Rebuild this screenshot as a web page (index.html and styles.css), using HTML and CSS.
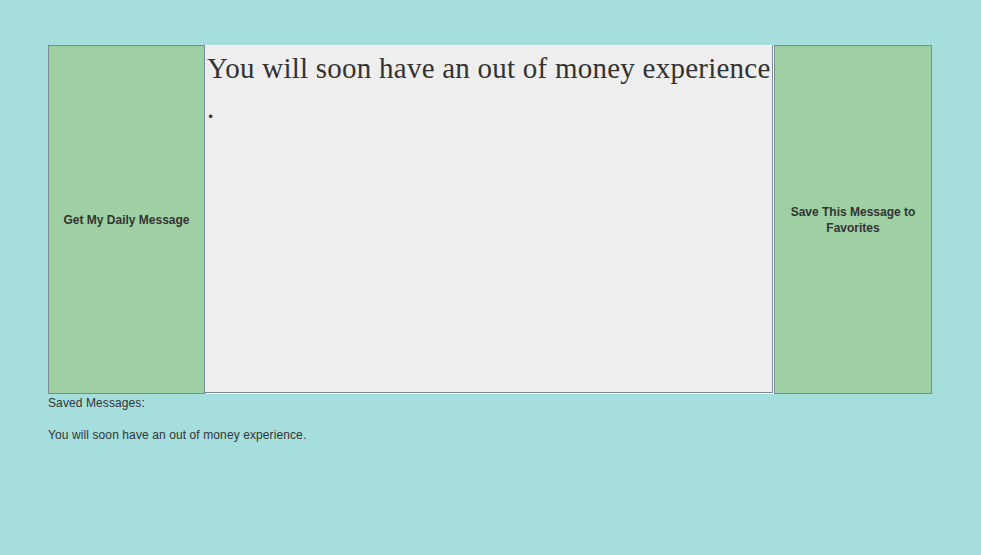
FILE: index.html
```html
<!DOCTYPE html>
<html>
<head>
<meta charset="utf-8">
<link rel="stylesheet" href="styles.css">
</head>
<body>
<div class="app">
  <div class="row">
    <div class="btn btn-left">Get My Daily Message</div>
    <div class="message">You will soon have an out of money experience<br>.</div>
    <div class="btn btn-right">Save This Message to Favorites</div>
  </div>
  <div class="saved">
    <div class="line">Saved Messages:</div>
    <div class="line">&nbsp;</div>
    <div class="line">You will soon have an out of money experience.</div>
  </div>
</div>
</body>
</html>
```
FILE: styles.css
```css
html, body {
  margin: 0;
  padding: 0;
  background: #a6dede;
  height: 100%;
}
.app {
  padding: 45px 0 0 48px;
  width: 884px;
}
.row {
  display: flex;
  height: 349px;
}
.btn {
  box-sizing: border-box;
  background: #9ed0a4;
  border: 1px solid #7a8a99;
  display: flex;
  align-items: center;
  justify-content: center;
  text-align: center;
  font-family: "Liberation Sans", Arial, sans-serif;
  font-weight: bold;
  font-size: 12px;
  line-height: 16px;
  color: #333333;
}
.btn-left {
  width: 157px;
}
.btn-right {
  width: 158px;
  margin-left: 1px;
  padding: 0 14px;
}
.message {
  box-sizing: border-box;
  width: 568px;
  height: 348px;
  background: #eeeeee;
  border-top: 1px solid #f4f4f4;
  border-right: 1px solid #7a8a99;
  border-bottom: 1px solid #7a8a99;
  box-shadow: 1px 1px 0 #ffffff;
  padding: 2px 0 0 2px;
  font-family: "Liberation Serif", "Times New Roman", serif;
  font-size: 29px;
  line-height: 40px;
  letter-spacing: 0.24px;
  color: #333333;
  white-space: nowrap;
  overflow: hidden;
}
.saved {
  font-family: "Liberation Sans", Arial, sans-serif;
  font-size: 12px;
  line-height: 16px;
  color: #333333;
  padding-top: 1px;
  letter-spacing: 0.1px;
}
```
